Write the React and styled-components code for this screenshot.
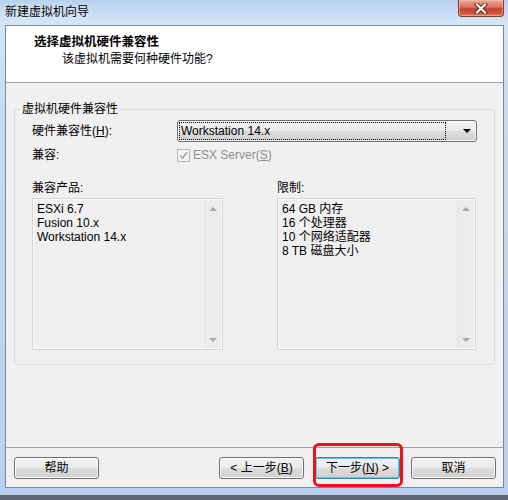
import React from "react";
import styled, { createGlobalStyle } from "styled-components";

const GlobalStyle = createGlobalStyle`
  html, body {
    margin: 0;
    padding: 0;
    background: #5d6874;
  }
  body {
    font-family: "Liberation Sans", "Noto Sans CJK SC", sans-serif;
    font-size: 12px;
    line-height: 15px;
    color: #000;
  }
  * { box-sizing: border-box; }
`;

const Window = styled.div`
  width: 508px;
  height: 495px;
  display: flex;
  flex-direction: column;
  padding: 0 4px 7px 5px;
  background: linear-gradient(180deg, #b6d0ec 0%, #d3e5f8 22px, #c4dbf3 120px, #b7d1ee 100%);
`;

const TitleBar = styled.div`
  height: 25px;
  display: flex;
  justify-content: space-between;
  align-items: flex-start;
`;

const TitleText = styled.div`
  padding-top: 5px;
  line-height: 15px;
  color: #000;
  text-shadow: 0 0 6px rgba(255, 255, 255, 0.9);
`;

const CloseButton = styled.div`
  width: 46px;
  height: 17px;
  display: flex;
  align-items: center;
  justify-content: center;
  border: 1px solid #8b3a2c;
  border-top: none;
  border-radius: 0 0 4px 4px;
  background: linear-gradient(180deg, #e9a898 0%, #d9715d 45%, #c2412a 55%, #d0593f 85%, #e27b5e 100%);
  box-shadow: inset 0 0 0 1px rgba(255, 200, 180, 0.5);
`;

const Client = styled.div`
  flex: 1;
  display: flex;
  flex-direction: column;
  border: 1px solid #7b8896;
  background: #f0f0f0;
`;

const Header = styled.div`
  height: 57px;
  background: #fff;
  border-bottom: 1px solid #a0a0a0;
  padding: 8px 0 0 28px;
`;

const HeaderTitle = styled.div`
  font-weight: bold;
  font-size: 12.5px;
  line-height: 16px;
`;

const HeaderSub = styled.div`
  line-height: 16px;
  margin-top: 1px;
  padding-left: 28px;
`;

const Body = styled.div`
  flex: 1;
  display: flex;
  flex-direction: column;
`;

const Group = styled.fieldset`
  margin: 19px 8px 0 8px;
  padding: 0;
  height: 263px;
  border: 1px solid #d5dfe5;
  border-radius: 3px;
  min-width: 0;
`;

const Legend = styled.legend`
  margin-left: 5px;
  padding: 0 2px;
  line-height: 15px;
`;

const GroupInner = styled.div`
  padding-left: 17px;
`;

const FormGrid = styled.div`
  display: grid;
  grid-template-columns: 145px 300px;
  grid-template-rows: 22px 20px;
  row-gap: 3px;
  margin-top: 3px;
  align-items: center;
`;

const Accel = styled.span`
  text-decoration: underline;
  text-underline-offset: 1px;
`;

const Combo = styled.div`
  height: 22px;
  display: flex;
  align-items: center;
  padding: 1px;
  border: 1px solid #707070;
  border-radius: 3px;
  background: linear-gradient(180deg, #f2f2f2 0%, #ebebeb 48%, #dddddd 52%, #cfcfcf 100%);
  box-shadow: inset 0 0 0 1px #fbfbfb;
`;

const ComboText = styled.div`
  flex: 1;
  height: 18px;
  margin-right: 17px;
  padding-left: 1px;
  line-height: 16px;
  border: 1px dotted #000;
`;

const ComboArrow = styled.div`
  width: 0;
  height: 0;
  margin-right: 4px;
  border-left: 4px solid transparent;
  border-right: 4px solid transparent;
  border-top: 4px solid #000;
`;

const CheckRow = styled.div`
  display: flex;
  align-items: center;
  gap: 3px;
  color: #8d8d8d;
`;

const CheckBox = styled.div`
  width: 13px;
  height: 13px;
  border: 1px solid #b7b7b7;
  background: #f4f4f4;
  display: flex;
  align-items: center;
  justify-content: center;
`;

const ListsRow = styled.div`
  display: flex;
  gap: 54px;
  margin-top: 16px;
`;

const ListColumn = styled.div`
  width: ${(p) => p.$width}px;
  display: flex;
  flex-direction: column;
  gap: 2px;
`;

const ListBox = styled.div`
  height: 152px;
  display: flex;
  border: 1px solid #d6d6d6;
  box-shadow: inset 0 0 0 1px #fafafa;
  background: #f0f0f0;
`;

const ListItems = styled.div`
  flex: 1;
  padding: 3px 4px;
  line-height: 14px;
`;

const ScrollBar = styled.div`
  width: 17px;
  margin: 1px 1px 1px 0;
  display: flex;
  flex-direction: column;
  justify-content: space-between;
  align-items: center;
  padding: 7px 0 6px;
  border-left: 1px dotted #dcdcdc;
  background: #ececec;
`;

const Tri = styled.div`
  width: 0;
  height: 0;
  border-left: 4px solid transparent;
  border-right: 4px solid transparent;
  ${(p) => (p.$up ? "border-bottom: 4px solid #a9a9a9;" : "border-top: 4px solid #a9a9a9;")}
`;

const Footer = styled.div`
  height: 40px;
  display: flex;
  align-items: flex-start;
  gap: 11px;
  padding: 9px 7px 0 8px;
  border-top: 1px solid #a0a0a0;
`;

const Button = styled.div`
  width: 85px;
  height: 22px;
  display: flex;
  align-items: center;
  justify-content: center;
  border: 1px solid ${(p) => (p.$default ? "#3c7fb1" : "#707070")};
  border-radius: 3px;
  background: linear-gradient(180deg, #f2f2f2 0%, #ebebeb 48%, #dddddd 52%, #cfcfcf 100%);
  box-shadow: inset 0 0 0 1px ${(p) => (p.$default ? "#62c8f2" : "#fcfcfc")};
  margin-left: ${(p) => (p.$push ? "auto" : "0")};
`;

const Highlight = styled.div`
  position: relative;
  &::after {
    content: "";
    position: absolute;
    top: -14px;
    left: -2px;
    right: -3px;
    bottom: -8px;
    border: 3px solid #e8121c;
    border-radius: 6px;
    pointer-events: none;
  }
`;

const compatible = ["ESXi 6.7", "Fusion 10.x", "Workstation 14.x"];
const limits = ["64 GB 内存", "16 个处理器", "10 个网络适配器", "8 TB 磁盘大小"];

function ListPanel({ label, items, width }) {
  return (
    <ListColumn $width={width}>
      <div>{label}</div>
      <ListBox>
        <ListItems>
          {items.map((it) => (
            <div key={it}>{it}</div>
          ))}
        </ListItems>
        <ScrollBar>
          <Tri $up />
          <Tri />
        </ScrollBar>
      </ListBox>
    </ListColumn>
  );
}

export default function App() {
  return (
    <>
      <GlobalStyle />
      <Window>
        <TitleBar>
          <TitleText>新建虚拟机向导</TitleText>
          <CloseButton>
            <svg width="14" height="11" viewBox="0 0 14 11">
              <path d="M3 1.5 L11 9.5 M11 1.5 L3 9.5" stroke="#5a1a10" strokeWidth="4" strokeLinecap="square" />
              <path d="M3 1.5 L11 9.5 M11 1.5 L3 9.5" stroke="#fff" strokeWidth="2.2" strokeLinecap="square" />
            </svg>
          </CloseButton>
        </TitleBar>
        <Client>
          <Header>
            <HeaderTitle>选择虚拟机硬件兼容性</HeaderTitle>
            <HeaderSub>该虚拟机需要何种硬件功能?</HeaderSub>
          </Header>
          <Body>
            <Group>
              <Legend>虚拟机硬件兼容性</Legend>
              <GroupInner>
                <FormGrid>
                  <div>
                    硬件兼容性(<Accel>H</Accel>):
                  </div>
                  <Combo>
                    <ComboText>Workstation 14.x</ComboText>
                    <ComboArrow />
                  </Combo>
                  <div>兼容:</div>
                  <CheckRow>
                    <CheckBox>
                      <svg width="9" height="9" viewBox="0 0 9 9">
                        <path d="M1 4.5 L3.5 7 L8 1.5" fill="none" stroke="#a4a4a4" strokeWidth="1.6" />
                      </svg>
                    </CheckBox>
                    <span>
                      ESX Server(<Accel>S</Accel>)
                    </span>
                  </CheckRow>
                </FormGrid>
                <ListsRow>
                  <ListPanel label="兼容产品:" items={compatible} width={191} />
                  <ListPanel label="限制:" items={limits} width={199} />
                </ListsRow>
              </GroupInner>
            </Group>
          </Body>
          <Footer>
            <Button>帮助</Button>
            <Button $push>
              &lt; 上一步(<Accel>B</Accel>)
            </Button>
            <Highlight>
              <Button $default>
                下一步(<Accel>N</Accel>) &gt;
              </Button>
            </Highlight>
            <Button>取消</Button>
          </Footer>
        </Client>
      </Window>
    </>
  );
}
